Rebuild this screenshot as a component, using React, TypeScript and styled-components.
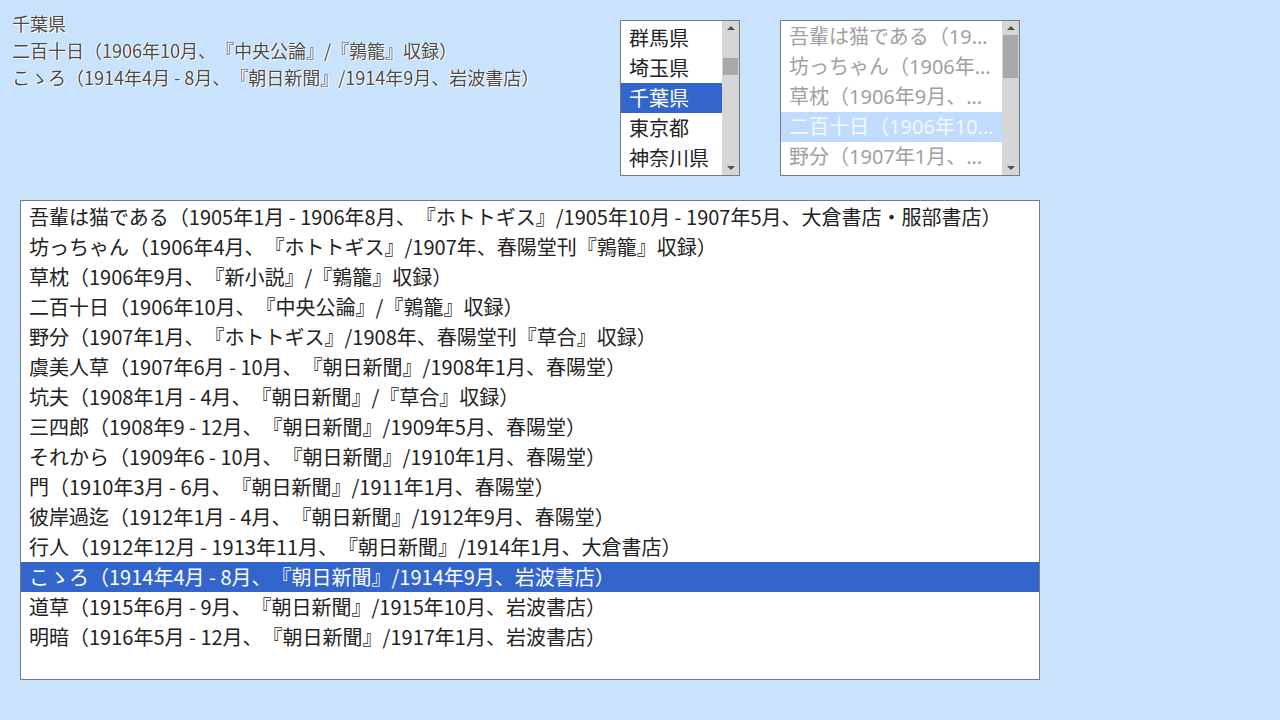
import React, { useEffect, useRef } from 'react'
import styled, { createGlobalStyle } from 'styled-components'

const prefectures = [
  '北海道', '青森県', '岩手県', '宮城県', '秋田県', '山形県', '福島県', '茨城県', '栃木県', '群馬県',
  '埼玉県', '千葉県', '東京都', '神奈川県', '新潟県', '富山県', '石川県', '福井県', '山梨県', '長野県',
  '岐阜県', '静岡県', '愛知県', '三重県', '滋賀県', '京都府', '大阪府', '兵庫県', '奈良県', '和歌山県',
  '鳥取県', '島根県', '岡山県', '広島県', '山口県', '徳島県', '香川県', '愛媛県', '高知県', '福岡県',
  '佐賀県', '長崎県', '熊本県', '大分県', '宮崎県', '鹿児島県', '沖縄県',
]

const works = [
  '吾輩は猫である（1905年1月 - 1906年8月、『ホトトギス』/1905年10月 - 1907年5月、大倉書店・服部書店）',
  '坊っちゃん（1906年4月、『ホトトギス』/1907年、春陽堂刊『鶉籠』収録）',
  '草枕（1906年9月、『新小説』/『鶉籠』収録）',
  '二百十日（1906年10月、『中央公論』/『鶉籠』収録）',
  '野分（1907年1月、『ホトトギス』/1908年、春陽堂刊『草合』収録）',
  '虞美人草（1907年6月 - 10月、『朝日新聞』/1908年1月、春陽堂）',
  '坑夫（1908年1月 - 4月、『朝日新聞』/『草合』収録）',
  '三四郎（1908年9 - 12月、『朝日新聞』/1909年5月、春陽堂）',
  'それから（1909年6 - 10月、『朝日新聞』/1910年1月、春陽堂）',
  '門（1910年3月 - 6月、『朝日新聞』/1911年1月、春陽堂）',
  '彼岸過迄（1912年1月 - 4月、『朝日新聞』/1912年9月、春陽堂）',
  '行人（1912年12月 - 1913年11月、『朝日新聞』/1914年1月、大倉書店）',
  'こゝろ（1914年4月 - 8月、『朝日新聞』/1914年9月、岩波書店）',
  '道草（1915年6月 - 9月、『朝日新聞』/1915年10月、岩波書店）',
  '明暗（1916年5月 - 12月、『朝日新聞』/1917年1月、岩波書店）',
]

const ROW = 30
const ARROW = 14
const MIN_THUMB = 17

const Global = createGlobalStyle`
  html, body {
    margin: 0;
    padding: 0;
    background: #c9e3fd;
  }
  body {
    font-family: "Noto Sans CJK JP", "Noto Sans", sans-serif;
    text-spacing-trim: space-all;
  }
`

const Page = styled.div`
  width: 1280px;
  height: 720px;
  padding: 10px 0 0 0;
  box-sizing: border-box;
`

const TopRow = styled.div`
  display: flex;
  align-items: flex-start;
`

const Info = styled.div`
  width: 608px;
  padding: 0 0 0 12px;
  font-size: 18px;
  line-height: 27px;
  color: #4a4a4a;
  text-shadow: 1px 1px 0 #fff, -1px 0 0 #fff;
  white-space: nowrap;
`

const Frame = styled.div<{ $width: number; $height: number; $disabled?: boolean }>`
  width: ${(p) => p.$width}px;
  height: ${(p) => p.$height}px;
  box-sizing: border-box;
  border: 1px solid #7a7a7a;
  background: #fff;
  display: flex;
  flex: none;
  color: ${(p) => (p.$disabled ? '#a0a0a0' : '#222')};
  font-family: ${(p) => (p.$disabled ? '"Noto Sans", "Noto Sans CJK JP", sans-serif' : 'inherit')};
  font-size: 20px;
  line-height: ${ROW}px;
`

const Viewport = styled.div`
  flex: 1;
  min-width: 0;
  padding: 1px 0;
  overflow-y: auto;
  overflow-x: hidden;
  scrollbar-width: none;
  &::-webkit-scrollbar {
    display: none;
  }
`

const Option = styled.div<{ $selected?: boolean; $disabled?: boolean }>`
  height: ${ROW}px;
  padding: 0 8px;
  white-space: nowrap;
  overflow: hidden;
  text-overflow: ellipsis;
  background: ${(p) => (p.$selected ? (p.$disabled ? '#c0dbfd' : '#3366cc') : 'transparent')};
  color: ${(p) => (p.$selected ? (p.$disabled ? '#f4f8ff' : '#fff') : 'inherit')};
`

const ScrollBar = styled.div`
  width: 17px;
  flex: none;
  background: #d6d6d6;
  display: flex;
  flex-direction: column;
`

const ArrowButton = styled.div`
  height: ${ARROW}px;
  flex: none;
  display: flex;
  align-items: center;
  justify-content: center;
`

const Triangle = styled.div<{ $down?: boolean }>`
  width: 0;
  height: 0;
  border-left: 4px solid transparent;
  border-right: 4px solid transparent;
  ${(p) => (p.$down ? 'border-top: 4px solid #505050;' : 'border-bottom: 4px solid #505050;')}
`

const Track = styled.div`
  flex: 1;
  display: flex;
  flex-direction: column;
`

const Thumb = styled.div`
  margin: 0 1px;
  background: #a9a9a9;
`

const TopList = styled.div<{ $gap?: number }>`
  margin: 10px 0 0 ${(p) => p.$gap ?? 0}px;
`

const Main = styled.div`
  margin: 24px 0 0 20px;
`

type ListProps = {
  items: string[]
  selected: number
  width: number
  height: number
  scrollTop?: number
  disabled?: boolean
}

function List({ items, selected, width, height, scrollTop = 0, disabled }: ListProps) {
  const ref = useRef<HTMLDivElement>(null)
  const view = height - 2
  const content = items.length * ROW + 2
  const scrolls = content > view

  useEffect(() => {
    if (ref.current) ref.current.scrollTop = scrollTop
  }, [scrollTop])

  let thumbTop = 0
  let thumbHeight = 0
  if (scrolls) {
    const track = view - ARROW * 2
    thumbHeight = Math.max(MIN_THUMB, Math.round((track * view) / content))
    thumbTop = Math.round(((track - thumbHeight) * scrollTop) / (content - view))
  }

  return (
    <Frame $width={width} $height={height} $disabled={disabled}>
      <Viewport ref={ref} role="listbox" aria-disabled={disabled || undefined}>
        {items.map((it, i) => (
          <Option key={it} role="option" aria-selected={i === selected} $selected={i === selected} $disabled={disabled}>
            {it}
          </Option>
        ))}
      </Viewport>
      {scrolls && (
        <ScrollBar>
          <ArrowButton>
            <Triangle />
          </ArrowButton>
          <Track>
            <Thumb style={{ marginTop: thumbTop, height: thumbHeight }} />
          </Track>
          <ArrowButton>
            <Triangle $down />
          </ArrowButton>
        </ScrollBar>
      )}
    </Frame>
  )
}

export default function App() {
  const prefSel = prefectures.indexOf('千葉県')
  const workSel = 3
  const mainSel = 12

  return (
    <Page>
      <Global />
      <TopRow>
        <Info>
          <div>{prefectures[prefSel]}</div>
          <div>{works[workSel]}</div>
          <div>{works[mainSel]}</div>
        </Info>
        <TopList>
          <List items={prefectures} selected={prefSel} width={120} height={156} scrollTop={9 * ROW - 1} />
        </TopList>
        <TopList $gap={40}>
          <List items={works} selected={workSel} width={240} height={156} disabled />
        </TopList>
      </TopRow>
      <Main>
        <List items={works} selected={mainSel} width={1020} height={480} />
      </Main>
    </Page>
  )
}
